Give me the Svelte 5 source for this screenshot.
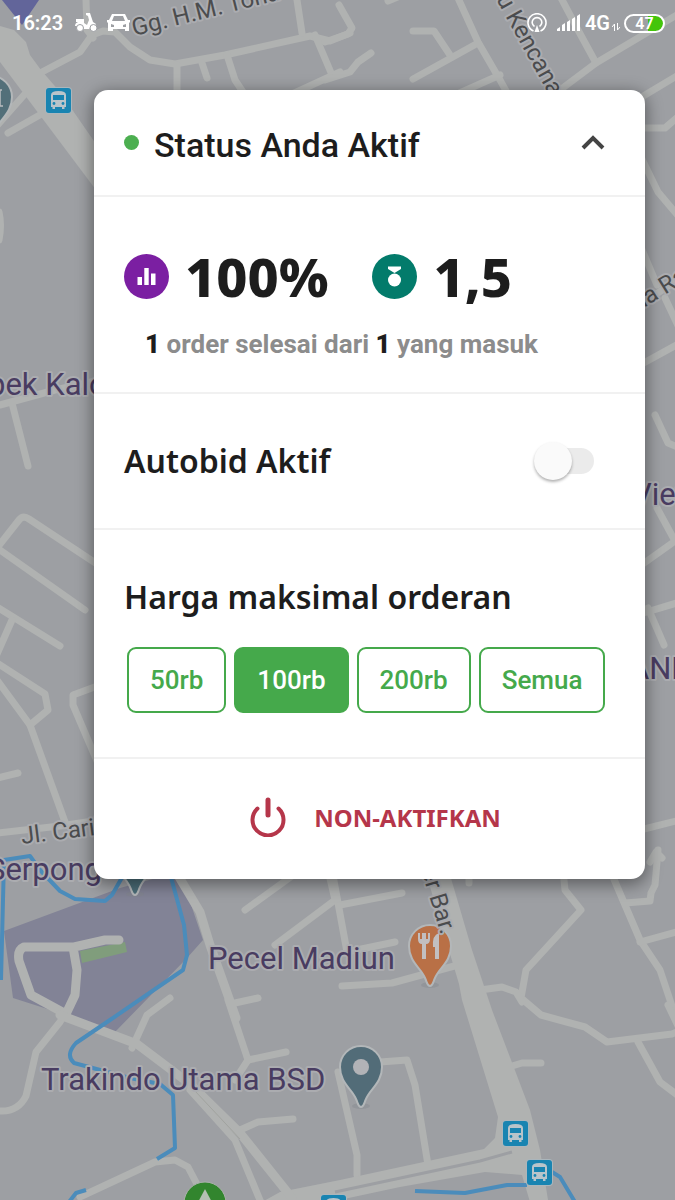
<script>
  let autobid = $state(false);
  let price = $state('100rb');
  const prices = ['50rb', '100rb', '200rb', 'Semua'];

  const roads = [
    'M42 72L80 52L92 35L103 31L115 32L130 47L150 60L175 64L225 55L310 36L330 41L350 33',
    'M86 0L87 30L93 38', 'M177 65V95', 'M202 63L207 78', 'M227 55L235 80L245 95',
    'M297 0L302 33', 'M315 35L332 75', 'M290 95L340 72', 'M-5 128L24 95', 'M8 133L45 112',
    'M339 5L352 28L348 34L325 42', 'M413 31H434L450 55', 'M413 79L478 43', 'M458 -2L478 42L500 80L510 98',
    'M325 80L350 72L358 62L371 53', 'M388 1L400 -4', 'M455 95L500 75', 'M560 -4L578 30L596 63',
    'M560 90L596 63L680 13', 'M640 98L680 74', 'M640 128H665L680 115', 'M640 155L658 192L680 218',
    'M640 245L657 285', 'M640 305L680 278', 'M665 298L680 330', 'M640 365L680 343',
    'M655 415L668 443L680 448', 'M657 508L675 541L640 566', 'M640 614L680 602', 'M648 608L664 645',
    'M640 830L680 820', 'M650 862L656 852L662 858',
    'M0 405L55 390L100 380', 'M12 403L28 466',
    'M-3 548L19 520Q23 515 29 519L100 566', 'M0 550L85 610', 'M-3 607L60 646', 'M12 620L-3 654', 'M-3 663L45 694L48 710L30 725L-3 680',
    'M30 725L65 822', 'M100 685L73 695V705L100 768', 'M-3 778L18 773', 'M-3 833L60 826L100 820',
    'M-1 212Q2 225 -1 240', 'M245 910L292 876', 'M275 945L335 900L328 870',
    'M235 1003L258 998', 'M132 1048L147 1015L170 998', 'M65 1014L60 1022L36 1052L26 1096Q18 1112 0 1111',
    'M228 1000L248 1060L286 1052', 'M248 1060L235 1080', 'M240 1130L258 1122L293 1119', 'M190 1090L235 1140L262 1205',
    'M80 1197L155 1162L175 1160L188 1167L200 1190',
    'M332 870L347 952L395 942', 'M340 905L402 893', 'M342 986L392 983L458 965', 'M469 870V883',
    'M563 870L565 890L581 910L526 970L521 998L541 1015L585 1027L607 1042L672 1034L685 1029', 'M480 990L502 987L516 992L522 1002',
    'M610 870L640 940L660 970L675 1015', 'M625 903L650 901L651 893L655 885L658 850', 'M640 942L680 931',
    'M638 1042L660 1082L680 1097', 'M512 1066L522 1063H541', 'M380 1062L407 1060L415 1085L428 1165',
    'M338 1072L357 1155L357 1175', 'M668 1005L680 1030'
  ];
  const buses = [[46, 88], [503, 1121], [527, 1160], [321, 1195]];
</script>

{#snippet pin(x, y, color)}
  <g transform="translate({x} {y})">
    <ellipse cx="0" cy="39" rx="9" ry="3" fill="#83868c" opacity=".4" />
    <path d="M0 40C-3 40-3 36-5 32C-9 22-21 16-21 0A21 21 0 0 1 21 0C21 16 9 22 5 32C3 36 3 40 0 40Z" fill={color} stroke="#b3b7b9" stroke-width="2" />
  </g>
{/snippet}

<div class="page">
  <svg class="map" viewBox="0 0 675 1200" preserveAspectRatio="xMinYMin slice" aria-hidden="true">
    <rect width="675" height="1200" fill="#9d9fa3" />
    <path d="M4 931L120 888L160 877L175 870L182 878L203 940L187 958L115 1032L60 1013L13 998Z" fill="#828396" />
    <path d="M80 951L125 942L127 952L82 963Z" fill="#809d7c" />
    <g class="roads">
      {#each roads as d}<path {d} />{/each}
    </g>
    <g fill="#b0b2b1">
      <path d="M0 26L14 30L26 42L30 55L41 70L60 92L96 144V190L45 122L0 62Z" />
      <path d="M425 870L448 868L472 950L492 1010L530 1110L540 1150L548 1200L530 1202L522 1175L485 1172L400 1187L330 1202L255 1206L280 1192L340 1180L484 1149L495 1138L498 1117L462 1000L459 984Z" />
    </g>
    <path d="M335 1192L480 1161L512 1152" fill="none" stroke="#9d9fa3" stroke-width="3" />
    <g class="roads wide">
      <path d="M176 872L200 912L210 945L236 1018" />
      <path d="M119 940L105 940L74 947H24Q17 950 19 961L31 995L66 1014L75 995L77 970L73 947" />
      <path d="M60 1015L137 1044L190 1084L240 1133L292 1198" />
    </g>
    <path d="M195 1091L240 1139" stroke="#a1a39f" fill="none" />
    <g class="river">
      <path d="M1 980L4 860L30 856L40 870L60 891L75 899L105 901L112 895L124 874" />
      <path d="M169 870L184 925L187 955L183 970L110 1020L76 1043Q65 1055 74 1063L130 1078L160 1084L173 1095L175 1148L157 1159" />
      <path d="M86 1190L76 1193L69 1202" />
      <path d="M415 1191L465 1193L507 1185H527" /><path d="M552 1172L560 1177L575 1202" />
    </g>

    <path d="M-1 -6H43L39 0L22 25L2 0Z" fill="#62659a" />
    {@render pin(-9, 97, '#526f79')}
    <path d="M-3 90H2M0 90V106M-3 106H3" stroke="#b9bdc0" stroke-width="1.5" />
    {@render pin(135, 855, '#4b6d78')}
    {@render pin(430, 946, '#b97046')}
    {@render pin(361, 1067, '#526c78')}
    <circle cx="361" cy="1067" r="8" fill="#b2b3b7" />
    <path d="M418 933V939Q418 944 422 944V959H426V944Q430 944 430 939V933H428V939H426V933H422V939H420V933ZM439 933Q432 935 433 947H435V959H439Z" fill="#c2bfc0" />
    <circle cx="205" cy="1203" r="21" fill="#32852e" stroke="#abb2ac" />
    <path d="M205 1189L196 1206H214Z" fill="#b5c0b4" />

    {#each buses as [x, y]}
      <g transform="translate({x} {y})">
        <rect x="-1" y="-1" width="27" height="27" rx="4" fill="#abb6bc" />
        <rect width="25" height="25" rx="3" fill="#1984b1" />
        <path d="M5 7Q5 3 12.500 3T20 7V19H18.500V21H16V19H9V21H6.500V19H5Z" fill="#b9c4ca" />
        <rect x="7" y="7" width="11" height="5" fill="#1984b1" />
        <circle cx="8" cy="15.500" r="1.400" fill="#1984b1" /><circle cx="17" cy="15.500" r="1.400" fill="#1984b1" />
      </g>
    {/each}

    <g class="places">
      <text x="-12" y="395">pek Kalo</text>
      <text x="-13" y="880">Serpong</text>
      <text x="208" y="969">Pecel Madiun</text>
      <text x="41" y="1090">Trakindo Utama BSD</text>
      <text x="632" y="505">View</text>
      <text x="629" y="679">ANDA</text>
    </g>
    <g class="streets">
      <text transform="translate(134 36) rotate(-14)">Gg. H.M. Toha</text>
      <text transform="translate(492 -8) rotate(61)">ru Kencana</text>
      <text transform="translate(22 844) rotate(-7)">Jl. Carik</text>
      <text transform="translate(419 863) rotate(73)">ter Bar.</text>
      <text transform="translate(631 316) rotate(-32)">ma Raya</text>
    </g>
  </svg>

  <header class="statusbar">
    <span>16:23</span>
    <svg class="scooter" width="24" height="20" viewBox="0 0 24 20" aria-hidden="true">
      <path d="M2 6H10V10L13 12L15 7L14 3L12 2V0H16L19 9L22 11L21 13H18L15 16H9L7 13H1Q1 10 4 9H2Z" fill="#fff" />
      <circle cx="6" cy="15" r="3.500" fill="#fff" stroke="#9d9fa3" /><circle cx="19.500" cy="15" r="3.500" fill="#fff" stroke="#9d9fa3" />
    </svg>
    <svg width="24" height="20" viewBox="0 0 24 20" aria-hidden="true">
      <path fill-rule="evenodd" d="M5 1H18L21 7H23V9L22 10V18H18V16H6V18H1V10L0 9V7H2ZM7 3L5 8H18L16 3ZM4 11V14H7V12ZM19 11L16 12V14H19Z" fill="#fff" />
    </svg>
    <div class="signals">
      <svg width="20" height="20" viewBox="0 0 20 20" fill="none" stroke="#fff" stroke-width="1.600" aria-hidden="true">
        <path d="M6.500 18A9 9 0 1 1 13.500 18M7.500 13.500A4.800 4.800 0 1 1 12.500 13.500" /><path d="M10 12L7.500 19H12.500Z" fill="#fff" stroke="none" />
      </svg>
      <svg class="bars" width="24" height="18" viewBox="0 0 24 18" fill="#fff" aria-hidden="true">
        <path d="M0 17V15L3 13V17ZM5 17V11L8 9V17ZM10 17V8L13 6V17ZM15 17V5L18 3V17ZM20 17V2L23 0V17Z" />
      </svg>
      <span>4G</span>
      <svg class="data" width="8" height="8" viewBox="0 0 8 8" stroke="#fff" fill="none" aria-hidden="true"><path d="M2.500 8V1L0 4M5.500 0V7L8 4" /></svg>
      <span class="battery">47</span>
    </div>
  </header>

  <main class="card">
    <section class="head">
      <span class="dot"></span>
      <h1>Status Anda Aktif</h1>
      <button class="collapse" aria-label="Tutup" aria-expanded="true">
        <svg width="24" height="16" viewBox="0 0 24 16" fill="none" stroke="#444" stroke-width="4" aria-hidden="true"><path d="M2 13L12 3L22 13" /></svg>
      </button>
    </section>

    <section class="stats">
      <div class="figures">
        <svg width="45" height="45" viewBox="0 0 45 45" aria-hidden="true">
          <circle cx="22.500" cy="22.500" r="22.500" fill="#7b1fa2" /><path d="M13.500 23H18V31H13.500ZM20.300 14H24.700V31H20.300ZM27 19.500H31.500V31H27Z" fill="#fff" />
        </svg>
        <strong>100%</strong>
        <svg class="medal" width="45" height="45" viewBox="0 0 45 45" aria-hidden="true">
          <circle cx="22.500" cy="22.500" r="22.500" fill="#037b6b" /><path d="M16 12.500H29V15L22.500 19L16 15Z" fill="#fff" /><circle cx="22.500" cy="26" r="6.500" fill="#fff" />
        </svg>
        <strong>1,5</strong>
      </div>
      <p><b>1</b> order selesai dari <b>1</b> yang masuk</p>
    </section>

    <section class="autobid">
      <label for="autobid">Autobid Aktif</label>
      <input id="autobid" type="checkbox" role="switch" bind:checked={autobid} />
    </section>

    <section class="limit">
      <h2>Harga maksimal orderan</h2>
      <div class="prices">
        {#each prices as p}
          <button class:selected={price === p} aria-pressed={price === p} onclick={() => (price = p)}>{p}</button>
        {/each}
      </div>
    </section>

    <button class="power">
      <svg width="36" height="40" viewBox="0 0 36 40" fill="none" stroke="#b5364a" stroke-width="4" stroke-linecap="round" aria-hidden="true">
        <path d="M18 3V18" stroke-width="5" /><path d="M7.500 11.500A15.500 15.500 0 1 0 28.500 11.500" />
      </svg>
      NON-AKTIFKAN
    </button>
  </main>
</div>

<style>
  :global(body) { margin: 0; }
  .page { position: relative; min-height: 100vh; overflow: hidden; background: #9d9fa3; font-family: Roboto, sans-serif; color: #1d1d1d; }
  .map { position: absolute; inset: 0; width: 100%; height: 100%; }
  .roads { fill: none; stroke: #b0b2b1; stroke-width: 7; stroke-linecap: round; stroke-linejoin: round; }
  .wide { stroke-width: 9; }
  .river { fill: none; stroke: #4b8cbb; stroke-width: 4; stroke-linejoin: round; }
  .places, .streets { stroke: #abacb0; stroke-width: 4; stroke-linejoin: round; paint-order: stroke; }
  .places { font-size: 31px; fill: #493c61; }
  .streets { font-size: 24px; fill: #4b4c4e; }

  .statusbar { position: relative; display: flex; align-items: center; height: 46px; padding: 0 10px 0 12px; color: #fff; font-size: 20px; font-weight: 600; }
  .scooter { margin: 0 9px 0 11px; }
  .signals { display: flex; align-items: center; margin-left: auto; }
  .bars { margin: 0 4px 0 10px; }
  .data { margin: 8px 4px 0 2px; }
  .battery { box-sizing: border-box; width: 41px; height: 19px; border: 2px solid #fff; border-radius: 10px; background: linear-gradient(90deg, transparent 60%, #43c50a 60%) padding-box; font-size: 16px; line-height: 15px; text-align: center; }

  .card { position: relative; margin: 44px 30px 40px 94px; border-radius: 14px; background: #fff; box-shadow: 0 4px 16px 2px rgb(0 0 0 / 40%); }
  section { border-bottom: 2px solid #f1f1f1; }
  h1, h2, p { margin: 0; }
  button { font-family: inherit; cursor: pointer; }
  .head { display: flex; align-items: center; height: 105px; padding: 0 40px 0 30px; }
  .dot { width: 15px; height: 15px; margin-right: 15px; border-radius: 50%; background: #4caf50; }
  h1 { flex: 1; padding-top: 4px; font-size: 34px; font-weight: 500; line-height: 40px; }
  .collapse { display: flex; padding: 0; border: 0; background: none; }
  .stats { padding: 48px 30px 32px; }
  .figures { display: flex; align-items: center; height: 62px; }
  .figures strong { margin-left: 16px; font: 800 54px/62px "Noto Sans", sans-serif; }
  .medal { margin-left: 44px; }
  .stats p { margin: 22px 0 0 21px; color: #8c8c8c; font-size: 26px; font-weight: 700; line-height: 31px; }
  .stats b { color: #1d1d1d; }
  .autobid { display: flex; align-items: center; justify-content: space-between; height: 134px; padding: 0 51px 0 30px; }
  .autobid label, h2 { font: 600 32px/44px "Noto Sans", sans-serif; }
  .autobid input { position: relative; appearance: none; width: 60px; height: 38px; margin: 0; cursor: pointer; }
  .autobid input::before { content: ""; position: absolute; inset: 6px 0 6px 14px; border-radius: 13px; background: #ebebeb; }
  .autobid input::after { content: ""; position: absolute; top: 0; left: 0; width: 38px; height: 38px; border-radius: 50%; background: #fafafa; box-shadow: 0 2px 3px rgb(0 0 0 / 30%); }
  .autobid input:checked::before { background: #a5d6a7; }
  .autobid input:checked::after { left: 22px; background: #45aa4b; }
  .limit { padding: 45px 30px 44px; }
  .prices { display: flex; gap: 8px; margin: 28px 0 0 3px; }
  .prices button { height: 66px; padding: 0 21px; border: 2px solid #45a94b; border-radius: 9px; background: #fff; color: #45a94b; font-size: 26px; font-weight: 500; }
  .prices .selected { background: #45a94b; color: #fff; }
  .power { display: flex; align-items: center; justify-content: center; gap: 28px; width: 100%; height: 120px; padding: 0 0 4px 12px; border: 0; background: none; color: #b5364a; font: 700 24px "Noto Sans", sans-serif; }
</style>
